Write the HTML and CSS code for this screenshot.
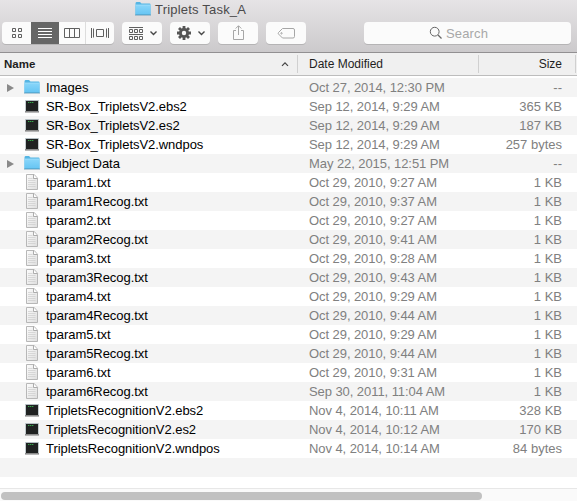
FILE: index.html
```html
<!DOCTYPE html>
<html lang="en">
<head>
<meta charset="utf-8">
<title>Triplets Task_A</title>
<link rel="stylesheet" href="styles.css">
</head>
<body>
<svg class="defs" width="0" height="0">
  <defs>
    <linearGradient id="sky" x1="0" y1="0" x2="0" y2="1"><stop offset="0" stop-color="#89d6fa"/><stop offset="1" stop-color="#66c5f3"/></linearGradient>
    <linearGradient id="paper" x1="0" y1="0" x2="1" y2="1"><stop offset="0" stop-color="#fdfdfd"/><stop offset="1" stop-color="#dedede"/></linearGradient>
    <symbol id="folder" viewBox="0 0 16 16">
      <path d="M.5 2.5Q.5 1 1.5 1H5l1.5 1.5h8q1 0 1 1V14H.5z" fill="#55b5e3"/>
      <path d="M.5 4h15v9.5H.5z" fill="url(#sky)"/>
      <path d="M.5 4h15" stroke="#a5e0fb" stroke-width=".8"/>
      <path d="M0 14h16" stroke="#5093b4" stroke-width=".8"/>
    </symbol>
    <symbol id="exec" viewBox="0 0 16 16">
      <path d="M1.2 2h13.6v12H1.2z" fill="#b4bfc3"/>
      <path d="M1 13h14v1.6H1z" fill="#8b8b8b"/>
      <path d="M2 3h12v10H2z" fill="#202222"/>
      <path d="M4 4.5h5.6" stroke="#36a54a" stroke-width="1" stroke-dasharray="1.4 .6"/>
    </symbol>
    <symbol id="text" viewBox="0 0 16 16">
      <path d="M2.5.5h7.7l3.3 3.7v11.3h-11z" fill="url(#paper)" stroke="#b0b0b0" stroke-width=".9"/>
      <path d="M9.5.7v3.8h3.8" fill="#fff" stroke="#999" stroke-width=".8"/>
      <path d="M4 4.5h4.5M4 6.5h7.5M4 8.5h7.5M4 10.5h7.5M4 12.5h7.5" stroke="#cdcdcd" stroke-width=".7"/>
    </symbol>
  </defs>
</svg>
<div class="window">
  <header class="titlebar">
    <div class="title"><svg class="icon"><use href="#folder"/></svg><span>Triplets Task_A</span></div>
    <div class="toolbar">
      <div class="views">
        <span class="seg first"><svg width="28" height="22" fill="none" stroke="#606060"><path d="M10.5 6.5h3v3h-3zM16.5 6.5h3v3h-3zM10.5 12.5h3v3h-3zM16.5 12.5h3v3h-3z"/></svg></span>
        <span class="seg selected"><svg width="28" height="22" stroke="#fff"><path d="M7 6.5h14M7 9.5h14M7 12.5h14M7 15.5h14"/></svg></span>
        <span class="seg columns"><svg width="27" height="22" fill="none" stroke="#606060"><path d="M5.5 6.5h15v9h-15zM10.5 6.5v9M15.5 6.5v9"/></svg></span>
        <span class="seg last"><svg width="28" height="22" fill="none" stroke="#606060"><path d="M10.5 7.5h7v7h-7zM5.5 6v10M7.5 6.5v9M20.5 6.5v9M22.5 6v10"/></svg></span>
      </div>
      <div class="button"><svg width="40" height="22" fill="none" stroke="#606060"><path d="M7 5.5h14M7 12.5h14M7.5 7.5h3v3h-3zM12.5 7.5h3v3h-3zM17.5 7.5h3v3h-3zM7.5 14.5h3v3h-3zM12.5 14.5h3v3h-3zM17.5 14.5h3v3h-3z"/><path d="M28.5 9.5l3 3 3-3" stroke="#484848" stroke-width="1.4"/></svg></div>
      <div class="button"><svg width="40" height="22" fill="none"><g stroke="#555"><path d="M14 4v14M7 11h14M9 6l10 10M19 6L9 16" stroke-width="2.8"/><circle cx="14" cy="11" r="3.8" stroke-width="2.5"/></g><circle cx="14" cy="11" r="2.2" fill="#fafafa"/><path d="M28.5 9.5l3 3 3-3" stroke="#484848" stroke-width="1.4"/></svg></div>
      <div class="button"><svg width="40" height="22" fill="none" stroke="#a6a6a6"><path d="M18 8.5h-2.5v9h10v-9H23M20.5 13V4M17.7 6.5l2.8-2.8 2.8 2.8"/></svg></div>
      <div class="button"><svg width="40" height="22" fill="none" stroke="#a6a6a6"><path d="M16.5 6.5h10.5q1.5 0 1.5 1.5v6.5q0 1.5-1.5 1.5h-10.5l-4-4q-.7-.8 0-1.5z"/><circle cx="15.5" cy="11.3" r=".7"/></svg></div>
      <div class="search"><svg width="14" height="14" fill="none" stroke="#666"><circle cx="5.7" cy="5.7" r="4.4"/><path d="M9 9l3.5 3.5" stroke-width="1.3"/></svg><span>Search</span></div>
    </div>
  </header>
  <div class="columns-head">
    <div class="h-name"><span>Name</span><svg width="8" height="6" fill="none" stroke="#444" stroke-width="1.2"><path d="M1 4.8l3-3 3 3"/></svg></div>
    <div class="h-date">Date Modified</div>
    <div class="h-size">Size</div>
  </div>
  <main class="list">
    <div class="row"><i class="arrow"></i><svg class="icon"><use href="#folder"/></svg><span class="name">Images</span><span class="date">Oct 27, 2014, 12:30 PM</span><span class="size">--</span></div>
    <div class="row"><i></i><svg class="icon"><use href="#exec"/></svg><span class="name">SR-Box_TripletsV2.ebs2</span><span class="date">Sep 12, 2014, 9:29 AM</span><span class="size">365 KB</span></div>
    <div class="row"><i></i><svg class="icon"><use href="#exec"/></svg><span class="name">SR-Box_TripletsV2.es2</span><span class="date">Sep 12, 2014, 9:29 AM</span><span class="size">187 KB</span></div>
    <div class="row"><i></i><svg class="icon"><use href="#exec"/></svg><span class="name">SR-Box_TripletsV2.wndpos</span><span class="date">Sep 12, 2014, 9:29 AM</span><span class="size">257 bytes</span></div>
    <div class="row"><i class="arrow"></i><svg class="icon"><use href="#folder"/></svg><span class="name">Subject Data</span><span class="date">May 22, 2015, 12:51 PM</span><span class="size">--</span></div>
    <div class="row"><i></i><svg class="icon"><use href="#text"/></svg><span class="name">tparam1.txt</span><span class="date">Oct 29, 2010, 9:27 AM</span><span class="size">1 KB</span></div>
    <div class="row"><i></i><svg class="icon"><use href="#text"/></svg><span class="name">tparam1Recog.txt</span><span class="date">Oct 29, 2010, 9:37 AM</span><span class="size">1 KB</span></div>
    <div class="row"><i></i><svg class="icon"><use href="#text"/></svg><span class="name">tparam2.txt</span><span class="date">Oct 29, 2010, 9:27 AM</span><span class="size">1 KB</span></div>
    <div class="row"><i></i><svg class="icon"><use href="#text"/></svg><span class="name">tparam2Recog.txt</span><span class="date">Oct 29, 2010, 9:41 AM</span><span class="size">1 KB</span></div>
    <div class="row"><i></i><svg class="icon"><use href="#text"/></svg><span class="name">tparam3.txt</span><span class="date">Oct 29, 2010, 9:28 AM</span><span class="size">1 KB</span></div>
    <div class="row"><i></i><svg class="icon"><use href="#text"/></svg><span class="name">tparam3Recog.txt</span><span class="date">Oct 29, 2010, 9:43 AM</span><span class="size">1 KB</span></div>
    <div class="row"><i></i><svg class="icon"><use href="#text"/></svg><span class="name">tparam4.txt</span><span class="date">Oct 29, 2010, 9:29 AM</span><span class="size">1 KB</span></div>
    <div class="row"><i></i><svg class="icon"><use href="#text"/></svg><span class="name">tparam4Recog.txt</span><span class="date">Oct 29, 2010, 9:44 AM</span><span class="size">1 KB</span></div>
    <div class="row"><i></i><svg class="icon"><use href="#text"/></svg><span class="name">tparam5.txt</span><span class="date">Oct 29, 2010, 9:29 AM</span><span class="size">1 KB</span></div>
    <div class="row"><i></i><svg class="icon"><use href="#text"/></svg><span class="name">tparam5Recog.txt</span><span class="date">Oct 29, 2010, 9:44 AM</span><span class="size">1 KB</span></div>
    <div class="row"><i></i><svg class="icon"><use href="#text"/></svg><span class="name">tparam6.txt</span><span class="date">Oct 29, 2010, 9:31 AM</span><span class="size">1 KB</span></div>
    <div class="row"><i></i><svg class="icon"><use href="#text"/></svg><span class="name">tparam6Recog.txt</span><span class="date">Sep 30, 2011, 11:04 AM</span><span class="size">1 KB</span></div>
    <div class="row"><i></i><svg class="icon"><use href="#exec"/></svg><span class="name">TripletsRecognitionV2.ebs2</span><span class="date">Nov 4, 2014, 10:11 AM</span><span class="size">328 KB</span></div>
    <div class="row"><i></i><svg class="icon"><use href="#exec"/></svg><span class="name">TripletsRecognitionV2.es2</span><span class="date">Nov 4, 2014, 10:12 AM</span><span class="size">170 KB</span></div>
    <div class="row"><i></i><svg class="icon"><use href="#exec"/></svg><span class="name">TripletsRecognitionV2.wndpos</span><span class="date">Nov 4, 2014, 10:14 AM</span><span class="size">84 bytes</span></div>
    <div class="row"></div>
  </main>
  <footer class="scrollbar"><div class="thumb"></div></footer>
</div>
</body>
</html>
```
FILE: styles.css
```css
* { box-sizing: border-box; }
body { margin: 0; background: #fff; font-family: "Liberation Sans", Arial, sans-serif; }
.defs { position: absolute; }
svg { display: block; flex: none; }
.window { display: flex; flex-direction: column; width: 577px; height: 501px; overflow: hidden; }
.titlebar { flex: none; height: 53px; background: linear-gradient(#e6e4e6, #cccacc); border-bottom: 1px solid #929092; }
.title { display: flex; align-items: center; height: 22px; padding-left: 135px; gap: 4px; padding-bottom: 4px; font-size: 13px; letter-spacing: .2px; color: #4b4a4b; }
.icon { width: 16px; height: 16px; }
.toolbar { display: flex; gap: 8px; padding-left: 2px; }
.views, .button, .search { height: 22px; border-radius: 4px; background: #fbfbfb; box-shadow: 0 1px 0 #b5b4b5; }
.views { display: flex; width: 112px; overflow: hidden; }
.seg { height: 22px; width: 28px; }
.first { width: 29px; }
.selected { background: #666; }
.columns { width: 27px; border-right: 1px solid #ddd; }
.button { width: 40px; }
.search { width: 207px; margin-left: 50px; display: flex; align-items: center; padding-left: 65px; gap: 3px; font-size: 13px; letter-spacing: .15px; color: #a8a8a8; }
.columns-head { flex: none; display: flex; height: 23px; padding: 2px 0; background: #f0f0f0; border-bottom: 1px solid #bdbdbd; font-size: 12px; line-height: 19px; color: #1e1e1e; }
.columns-head > div { border-right: 1px solid #d0d0d0; height: 18px; }
.h-name { display: flex; align-items: center; justify-content: space-between; width: 298px; padding: 0 8px 0 4px; font-size: 11.5px; font-weight: bold; }
.h-date { width: 181px; padding-left: 11px; }
.h-size { width: 97px; padding-right: 13px; text-align: right; }
.list { flex: 1; padding-top: 2px; }
.row { display: flex; align-items: flex-start; height: 19px; font-size: 13px; line-height: 19px; white-space: nowrap; color: #808080; }
.row:nth-child(odd) { background: #f4f4f4; }
.row .icon { margin-top: 1px; }
.row i { width: 17px; margin-right: 7px; }
.row .arrow { width: 0; height: 0; margin: 5.5px 10px 0 7px; border-left: 7px solid #898989; border-top: 4.5px solid transparent; border-bottom: 4.5px solid transparent; }
.name { width: 263px; margin-left: 6px; letter-spacing: -.05px; color: #000; }
.date { width: 169px; letter-spacing: -.07px; }
.size { width: 84px; text-align: right; }
.scrollbar { flex: none; height: 13px; padding: 3px 1px 0; background: #fafafa; border-top: 1px solid #e7e7e7; }
.thumb { width: 481px; height: 8px; border-radius: 4px; background: #c1c1c1; }
```
